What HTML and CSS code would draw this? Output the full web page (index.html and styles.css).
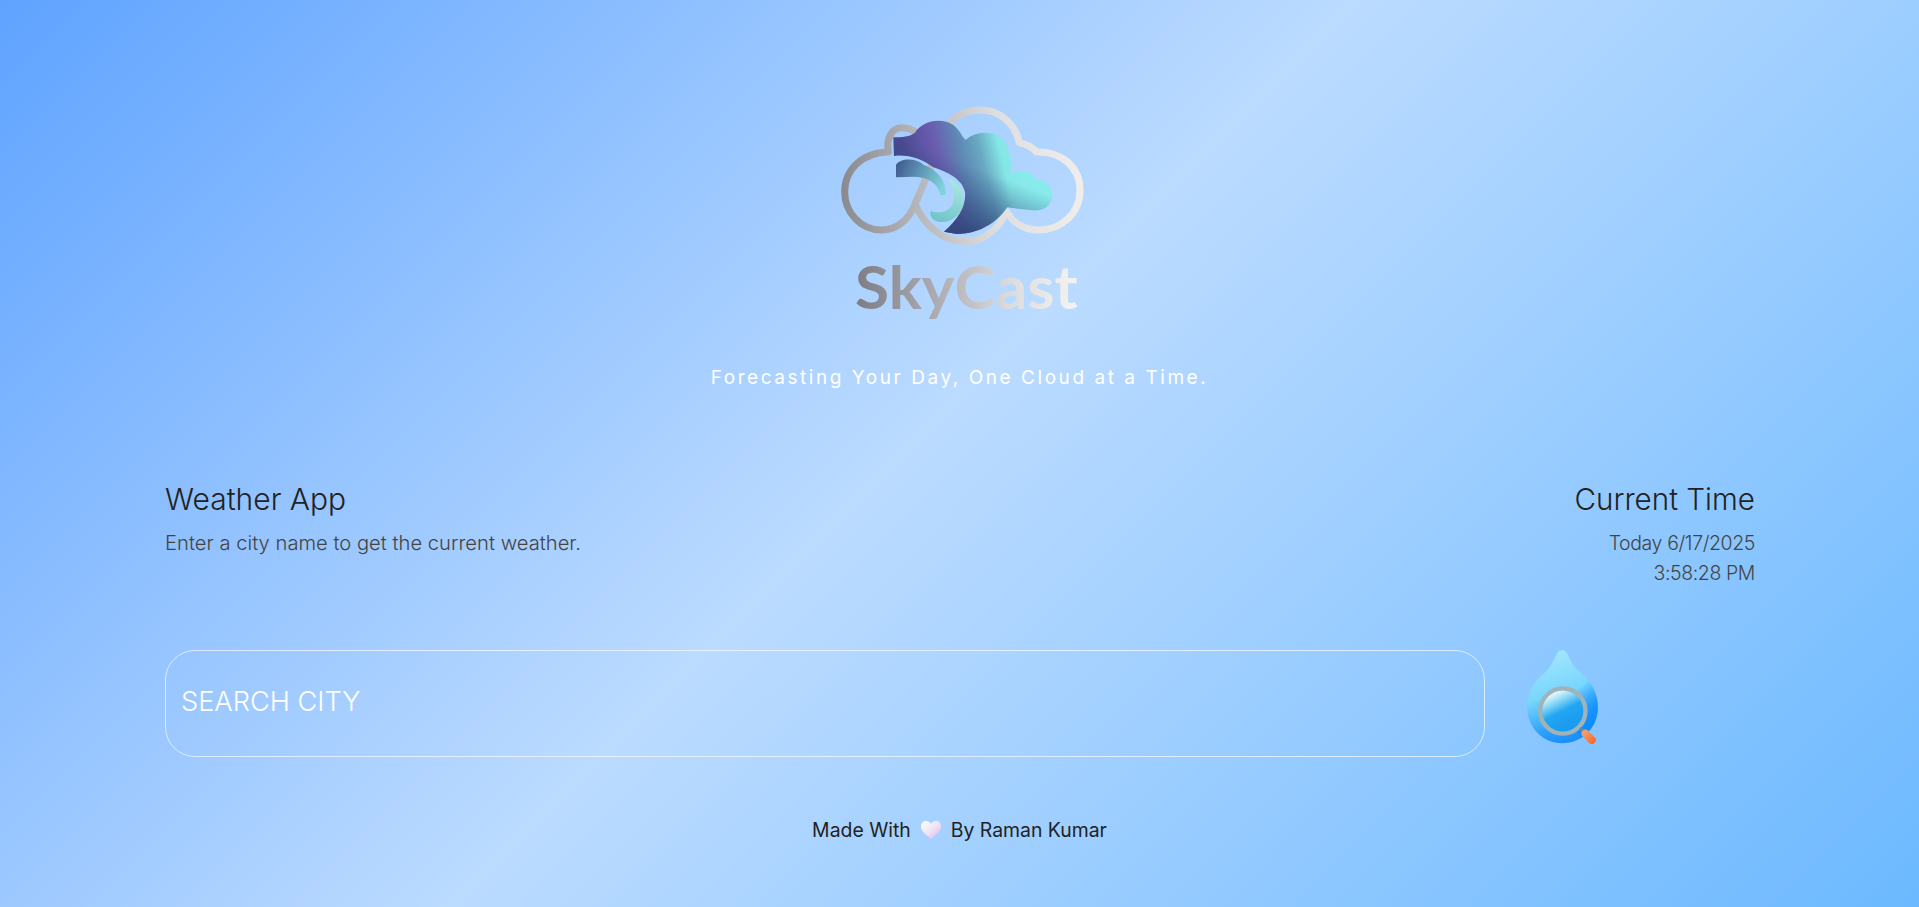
FILE: index.html
```html
<!DOCTYPE html>
<html lang="en">
<head>
<meta charset="utf-8">
<title>SkyCast</title>
<link rel="stylesheet" href="styles.css">
</head>
<body>
<div class="page">
  <header class="brand">
    <svg class="logo" viewBox="0 0 960 780" aria-label="SkyCast logo">
      <defs>
        <linearGradient id="metal" gradientUnits="userSpaceOnUse" x1="130" y1="0" x2="850" y2="0">
          <stop offset="0" stop-color="#8a8a8f"/>
          <stop offset=".35" stop-color="#bcbcc0"/>
          <stop offset=".65" stop-color="#dfdfe0"/>
          <stop offset="1" stop-color="#f0eeec"/>
        </linearGradient>
        <linearGradient id="word" gradientUnits="userSpaceOnUse" x1="165" y1="0" x2="830" y2="0">
          <stop offset="0" stop-color="#7c7c82"/>
          <stop offset=".4" stop-color="#b0b0b6"/>
          <stop offset=".7" stop-color="#dcdcde"/>
          <stop offset="1" stop-color="#f4f3f0"/>
        </linearGradient>
        <linearGradient id="storm" gradientUnits="userSpaceOnUse" x1="330" y1="300" x2="650" y2="220">
          <stop offset="0" stop-color="#4a4a90"/>
          <stop offset=".3" stop-color="#6a5cb0"/>
          <stop offset=".5" stop-color="#5f86b4"/>
          <stop offset=".68" stop-color="#68a8c2"/>
          <stop offset=".86" stop-color="#85e6e6"/>
          <stop offset="1" stop-color="#88eaea"/>
        </linearGradient>
        <linearGradient id="deep" gradientUnits="userSpaceOnUse" x1="550" y1="270" x2="480" y2="450">
          <stop offset="0" stop-color="#2c4a80" stop-opacity="0"/>
          <stop offset="1" stop-color="#2f4478" stop-opacity=".9"/>
        </linearGradient>
        <linearGradient id="wisp" gradientUnits="userSpaceOnUse" x1="285" y1="260" x2="430" y2="320">
          <stop offset="0" stop-color="#3f5a8e"/>
          <stop offset="1" stop-color="#7fd4dc"/>
        </linearGradient>
        <linearGradient id="crescent" gradientUnits="userSpaceOnUse" x1="450" y1="300" x2="400" y2="420">
          <stop offset="0" stop-color="#a9e6e0"/>
          <stop offset="1" stop-color="#6fc3c9"/>
        </linearGradient>
        <filter id="soft" x="-5%" y="-5%" width="110%" height="110%"><feGaussianBlur stdDeviation="1.6"/></filter>
      </defs>
      <g filter="url(#soft)">
        <path class="cloud-line" d="M345 372C325 425 285 450 245 450C180 450 134 395 134 335C134 270 185 218 265 216C258 175 275 143 305 143C325 143 340 150 352 160M450 128C475 100 505 90 540 90C600 90 645 130 658 188C680 192 695 200 710 216C785 214 840 262 840 330C840 400 785 450 715 450C675 450 640 430 620 395C590 455 545 485 495 485C430 485 375 440 345 372Z"/>
        <path fill="url(#storm)" d="M280 172C305 172 330 170 345 158C365 125 420 110 460 135C480 150 485 170 497 180C525 155 575 150 605 175C630 200 640 250 630 285C650 268 695 268 708 298C748 296 770 340 748 372C735 390 715 392 695 391L622 382C600 415 550 462 470 462L432 455C475 420 500 375 495 335C485 295 440 275 400 262C365 235 320 222 282 228Z"/>
        <path fill="url(#deep)" d="M280 172C305 172 330 170 345 158C365 125 420 110 460 135C480 150 485 170 497 180C525 155 575 150 605 175C630 200 640 250 630 285C650 268 695 268 708 298C748 296 770 340 748 372C735 390 715 392 695 391L622 382C600 415 550 462 470 462L432 455C475 420 500 375 495 335C485 295 440 275 400 262C365 235 320 222 282 228Z"/>
        <path fill="url(#wisp)" d="M288 255C300 235 345 232 372 255C410 270 440 300 437 345L422 346C415 310 385 292 345 290L288 292Z"/>
        <path fill="url(#crescent)" d="M442 296C480 305 498 340 490 375C480 410 445 432 415 425C395 420 388 405 392 392C415 402 445 398 458 372C468 345 460 320 442 296Z"/>
        <text class="logo-word" x="165" y="688" fill="url(#word)" textLength="668" lengthAdjust="spacingAndGlyphs">SkyCast</text>
      </g>
    </svg>
    <p class="tagline">Forecasting Your Day, One Cloud at a Time.</p>
  </header>

  <main class="content">
    <section class="info">
      <div>
        <h1 class="title">Weather App</h1>
        <p class="subtitle">Enter a city name to get the current weather.</p>
      </div>
      <div class="clock">
        <h2 class="title">Current Time</h2>
        <p class="subtitle">Today 6/17/2025</p>
        <p class="subtitle">3:58:28 PM</p>
      </div>
    </section>

    <section class="search">
      <div class="search-box">SEARCH CITY</div>
      <svg class="drop" viewBox="140 60 212 282" aria-label="Search">
        <defs>
          <linearGradient id="dropFill" gradientUnits="userSpaceOnUse" x1="205" y1="60" x2="290" y2="340">
            <stop offset="0" stop-color="#a4e7ff"/>
            <stop offset=".45" stop-color="#78d6fc"/>
            <stop offset=".8" stop-color="#2b9ffb"/>
            <stop offset="1" stop-color="#148bf7"/>
          </linearGradient>
          <linearGradient id="dropShade" gradientUnits="userSpaceOnUse" x1="290" y1="180" x2="350" y2="235">
            <stop offset="0" stop-color="#0f8cff" stop-opacity="0"/>
            <stop offset="1" stop-color="#0f8cff" stop-opacity=".9"/>
          </linearGradient>
          <linearGradient id="glass" gradientUnits="userSpaceOnUse" x1="212" y1="185" x2="262" y2="285">
            <stop offset="0" stop-color="#ffffff"/>
            <stop offset=".25" stop-color="#9fe2f8"/>
            <stop offset=".6" stop-color="#22a6f2"/>
            <stop offset="1" stop-color="#1a9cf0"/>
          </linearGradient>
          <linearGradient id="handle" gradientUnits="userSpaceOnUse" x1="310" y1="305" x2="340" y2="335">
            <stop offset="0" stop-color="#f0a070"/>
            <stop offset="1" stop-color="#ff6a2a"/>
          </linearGradient>
        </defs>
        <path fill="url(#dropFill)" d="M245 60C254 60 260 66 264 78C274 105 295 125 315 142C340 165 352 195 352 232C352 292 305 340 245 340C187 340 140 292 140 232C140 195 155 165 178 142C198 125 215 105 226 78C230 66 236 60 245 60Z"/>
        <path fill="url(#dropShade)" d="M300 122C330 150 352 190 352 232C352 270 335 305 300 325L247 243Z"/>
        <circle cx="247" cy="243" r="63" fill="url(#glass)"/>
        <circle cx="247" cy="243" r="68" fill="none" stroke="#9fb3b9" stroke-width="13"/>
        <path d="M298 294L310 306" stroke="#6f8a92" stroke-width="8"/>
        <path d="M315 311L334 330" stroke="url(#handle)" stroke-width="24" stroke-linecap="round"/>
      </svg>
    </section>
  </main>

  <footer class="footer">
    <span>Made With</span>
    <svg class="heart" viewBox="0 0 60 54" aria-label="love">
      <defs>
        <linearGradient id="heartFill" x1="0" y1="0" x2="1" y2="1">
          <stop offset="0" stop-color="#ffffff"/>
          <stop offset=".5" stop-color="#f0e4f6"/>
          <stop offset="1" stop-color="#dcb4e6"/>
        </linearGradient>
      </defs>
      <path fill="url(#heartFill)" d="M30 53C12 40 0 29 0 16C0 6 7 0 16 0C22 0 27 3 30 9C33 3 38 0 44 0C53 0 60 6 60 16C60 29 48 40 30 53Z"/>
    </svg>
    <span>By Raman Kumar</span>
  </footer>
</div>
</body>
</html>
```

FILE: styles.css
```css
* {
  box-sizing: border-box;
}

html,
body {
  margin: 0;
  height: 100%;
}

body {
  font-family: Inter, "Liberation Sans", sans-serif;
  font-weight: 300;
  overflow: hidden;
}

.page {
  height: 907px;
  background: linear-gradient(135deg, #5fa3ff 0%, #bbdbff 48%, #6cb9ff 100%);
  display: flex;
  flex-direction: column;
  padding-top: 80px;
}

.brand {
  display: flex;
  flex-direction: column;
  align-items: center;
}

.logo {
  width: 320px;
  height: 260px;
  display: block;
}

.cloud-line {
  fill: none;
  stroke: url(#metal);
  stroke-width: 21;
  stroke-linejoin: round;
}

.logo-word {
  font-family: Lato, sans-serif;
  font-size: 180px;
  font-weight: 700;
}

.tagline {
  margin: 24px 0 0;
  color: #fff;
  font-size: 19px;
  font-weight: 400;
  letter-spacing: 2.55px;
  line-height: 28px;
}

.content {
  padding: 0 164px 0 165px;
}

.info {
  display: flex;
  justify-content: space-between;
  margin-top: 89px;
  height: 169px;
}

.clock {
  text-align: right;
}

.clock .title {
  font-size: 29.6px;
}

.clock .subtitle {
  font-size: 19.5px;
  letter-spacing: -0.4px;
}

.title {
  margin: 0 0 11px;
  font-size: 30px;
  font-weight: 300;
  line-height: 36px;
  color: #222;
}

.subtitle {
  margin: 0;
  font-size: 20.2px;
  line-height: 30px;
  color: #444;
}

.search {
  display: flex;
  align-items: flex-start;
  gap: 42px;
}

.search-box {
  width: 1320px;
  height: 107px;
  border: 1px solid rgba(255, 255, 255, .65);
  border-radius: 30px;
  padding: 0 15px 5px;
  display: flex;
  align-items: center;
  color: #fff;
  font-size: 27.2px;
}

.drop {
  width: 71px;
  height: 94px;
  display: block;
}

.footer {
  margin-top: 58px;
  display: flex;
  justify-content: center;
  align-items: center;
  gap: 10px;
  font-size: 19.4px;
  font-weight: 400;
  line-height: 30px;
  color: #222;
}

.heart {
  width: 20px;
  height: 18px;
  display: block;
}
```
